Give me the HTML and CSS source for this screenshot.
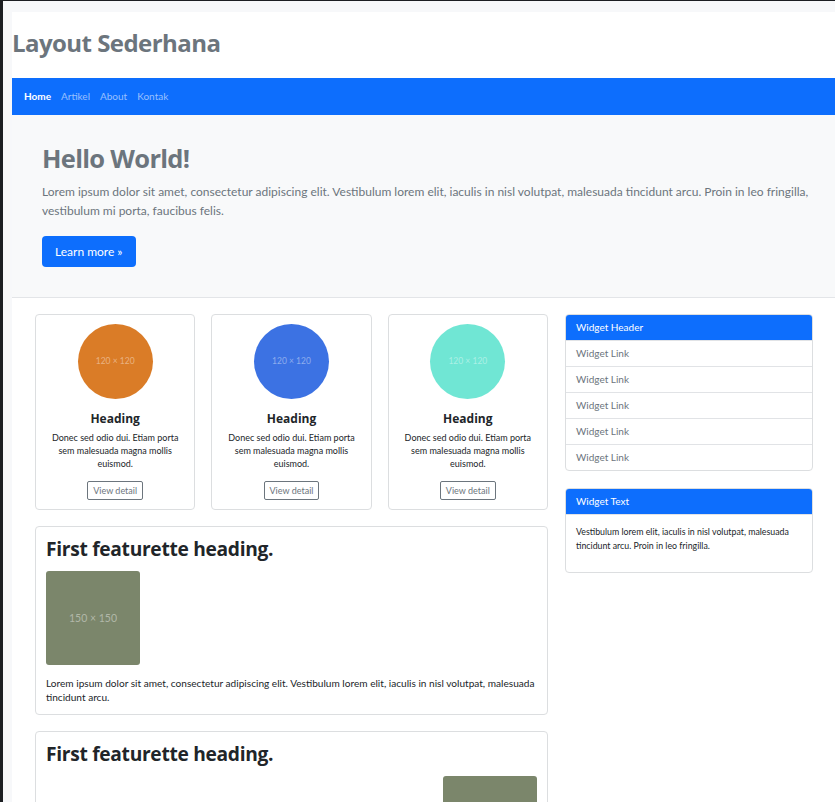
FILE: index.html
```html
<!DOCTYPE html>
<html lang="id">
<head>
<meta charset="utf-8">
<title>Layout Sederhana</title>
<link rel="stylesheet" href="styles.css">
</head>
<body>
<div class="frame">
  <div class="page">
    <header class="site-header">
      <h1 class="site-title">Layout Sederhana</h1>
    </header>
    <nav class="navbar">
      <a class="nav-link active" href="#">Home</a>
      <a class="nav-link" href="#">Artikel</a>
      <a class="nav-link" href="#">About</a>
      <a class="nav-link" href="#">Kontak</a>
    </nav>
    <section class="hero">
      <h1 class="hero-title">Hello World!</h1>
      <p class="lead">Lorem ipsum dolor sit amet, consectetur adipiscing elit. Vestibulum lorem elit, iaculis in nisl volutpat, malesuada tincidunt arcu. Proin in leo fringilla, vestibulum mi porta, faucibus felis.</p>
      <a class="btn-primary" href="#">Learn more »</a>
    </section>
    <main class="content">
      <div class="main-col">
        <div class="cards">
          <div class="card">
            <div class="circle orange"><span>120 × 120</span></div>
            <h5 class="card-heading">Heading</h5>
            <p class="card-text">Donec sed odio dui. Etiam porta sem malesuada magna mollis euismod.</p>
            <a class="btn-outline" href="#">View detail</a>
          </div>
          <div class="card">
            <div class="circle blue"><span>120 × 120</span></div>
            <h5 class="card-heading">Heading</h5>
            <p class="card-text">Donec sed odio dui. Etiam porta sem malesuada magna mollis euismod.</p>
            <a class="btn-outline" href="#">View detail</a>
          </div>
          <div class="card">
            <div class="circle teal"><span>120 × 120</span></div>
            <h5 class="card-heading">Heading</h5>
            <p class="card-text">Donec sed odio dui. Etiam porta sem malesuada magna mollis euismod.</p>
            <a class="btn-outline" href="#">View detail</a>
          </div>
        </div>
        <article class="feature">
          <h2 class="feature-title">First featurette heading.</h2>
          <div class="thumb"><span>150 × 150</span></div>
          <p class="feature-text">Lorem ipsum dolor sit amet, consectetur adipiscing elit. Vestibulum lorem elit, iaculis in nisl volutpat, malesuada tincidunt arcu.</p>
        </article>
        <article class="feature">
          <h2 class="feature-title">First featurette heading.</h2>
          <div class="thumb thumb-right"><span>150 × 150</span></div>
          <p class="feature-text">Lorem ipsum dolor sit amet, consectetur adipiscing elit. Vestibulum lorem elit, iaculis in nisl volutpat, malesuada tincidunt arcu.</p>
        </article>
      </div>
      <aside class="sidebar">
        <div class="widget">
          <div class="widget-header">Widget Header</div>
          <a class="widget-link" href="#">Widget Link</a>
          <a class="widget-link" href="#">Widget Link</a>
          <a class="widget-link" href="#">Widget Link</a>
          <a class="widget-link" href="#">Widget Link</a>
          <a class="widget-link" href="#">Widget Link</a>
        </div>
        <div class="widget">
          <div class="widget-header">Widget Text</div>
          <div class="widget-body">
            <p class="widget-text">Vestibulum lorem elit, iaculis in nisl volutpat, malesuada tincidunt arcu. Proin in leo fringilla.</p>
          </div>
        </div>
      </aside>
    </main>
  </div>
</div>
</body>
</html>
```
FILE: styles.css
```css
html, body {
  margin: 0;
  padding: 0;
}

body {
  background: #1c1e22;
  font-family: "Lato", "Open Sans", sans-serif;
  color: #212529;
}

a {
  text-decoration: none;
}

.frame {
  margin: 1px 0 0 3px;
  padding: 11px 0 0 9px;
  background: #f7f8fa;
  min-height: 900px;
}

.page {
  background: #fff;
  min-height: 890px;
}

/* header */
.site-header {
  padding: 16px 0 20px;
}

.site-title {
  margin: 0;
  font-family: "Open Sans", sans-serif;
  font-weight: 700;
  font-size: 24px;
  line-height: 30px;
  letter-spacing: -0.55px;
  color: #6c757d;
}

/* navbar */
.navbar {
  height: 37px;
  background: #0d6efd;
  display: flex;
  align-items: center;
  gap: 10px;
  padding-left: 12px;
}

.nav-link {
  font-size: 10px;
  line-height: 15px;
  color: rgba(255, 255, 255, 0.58);
}

.nav-link.active {
  color: #fff;
  font-weight: 700;
}

/* hero */
.hero {
  background: #f8f9fa;
  border-bottom: 1px solid #e3e5e8;
  padding: 27px 20px 30px 30px;
}

.hero-title {
  margin: 0 0 9px;
  font-family: "Open Sans", sans-serif;
  font-weight: 700;
  font-size: 25.5px;
  line-height: 32px;
  letter-spacing: -0.7px;
  color: #6c757d;
}

.lead {
  margin: 0 0 15px;
  font-size: 12px;
  line-height: 18.75px;
  color: #6c757d;
}

.btn-primary {
  display: inline-block;
  padding: 6px 13px;
  font-size: 12px;
  line-height: 19px;
  color: #fff;
  background: #0d6efd;
  border-radius: 4px;
}

/* content */
.content {
  display: grid;
  grid-template-columns: minmax(0, 513fr) minmax(0, 248fr);
  column-gap: 17px;
  padding: 16px 22px 0 23px;
  align-items: start;
}

.cards {
  display: grid;
  grid-template-columns: repeat(3, minmax(0, 1fr));
  column-gap: 16px;
}

.card {
  border: 1px solid #dcdee0;
  border-radius: 4px;
  padding: 9px 10px 9px;
  text-align: center;
}

.circle {
  width: 75px;
  height: 75px;
  margin: 0 auto;
  border-radius: 50%;
  display: flex;
  align-items: center;
  justify-content: center;
  font-size: 8.5px;
  color: rgba(255, 255, 255, 0.42);
}

.orange { background: #da7c27; }
.blue { background: #3c72e3; }
.teal { background: #70e6d4; }

.card-heading {
  margin: 12px 0 5px;
  font-family: "Open Sans", sans-serif;
  font-weight: 700;
  font-size: 12px;
  line-height: 15px;
  color: #212529;
}

.card-text {
  margin: 0 0 8px;
  font-size: 9px;
  line-height: 13px;
  color: #212529;
}

.btn-outline {
  display: inline-block;
  padding: 2px 5px;
  font-size: 9px;
  line-height: 13px;
  color: #6c757d;
  border: 1px solid #6c757d;
  border-radius: 2px;
}

/* featurettes */
.feature {
  margin-top: 16px;
  border: 1px solid #dcdee0;
  border-radius: 4px;
  padding: 10px;
}

.feature-title {
  margin: 0 0 10px;
  font-family: "Open Sans", sans-serif;
  font-weight: 700;
  font-size: 19.2px;
  line-height: 24px;
  letter-spacing: -0.3px;
  color: #212529;
}

.thumb {
  width: 94px;
  height: 94px;
  background: #7b866b;
  border-radius: 3px;
  display: flex;
  align-items: center;
  justify-content: center;
  font-size: 10.5px;
  color: rgba(255, 255, 255, 0.42);
}

.thumb-right {
  margin-left: auto;
}

.feature-text {
  margin: 11px 0 0;
  font-size: 10.1px;
  line-height: 14px;
  color: #212529;
}

/* sidebar */
.sidebar {
  display: flex;
  flex-direction: column;
  gap: 17px;
}

.widget {
  border: 1px solid #dcdee0;
  border-radius: 4px;
  overflow: hidden;
}

.widget-header {
  background: #0d6efd;
  color: #fff;
  font-size: 10px;
  line-height: 15px;
  padding: 5px 10px;
}

.widget-link {
  display: block;
  border-top: 1px solid #e1e3e6;
  padding: 5px 10px;
  font-size: 10px;
  line-height: 15px;
  color: #6c757d;
}

.widget-body {
  border-top: 1px solid #e1e3e6;
  padding: 10px 10px 18px;
}

.widget-text {
  margin: 0;
  font-size: 8.8px;
  line-height: 14.5px;
  color: #212529;
}
```
